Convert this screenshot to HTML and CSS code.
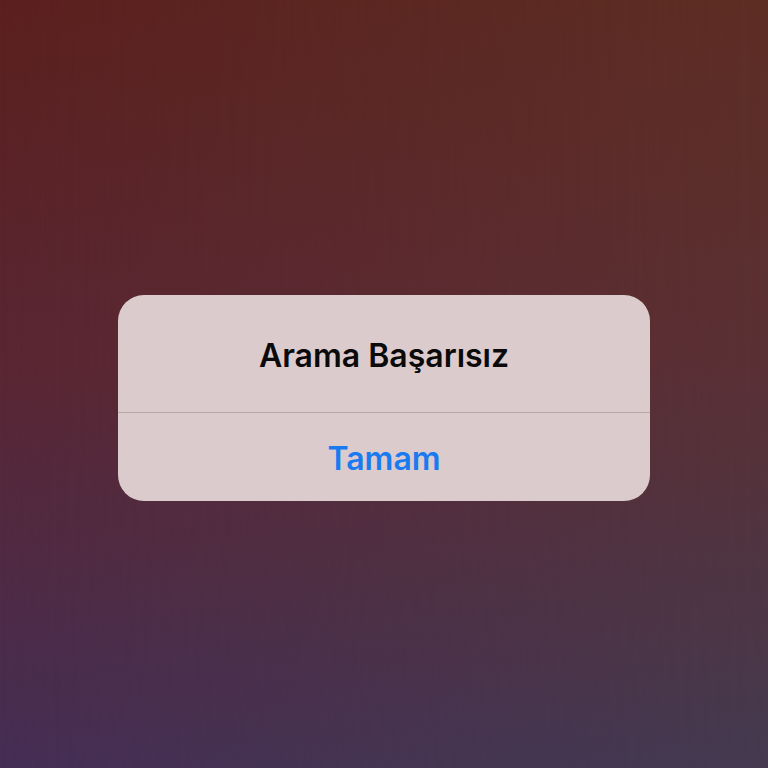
FILE: index.html
```html
<!DOCTYPE html>
<html lang="tr">
<head>
<meta charset="utf-8">
<link rel="stylesheet" href="styles.css">
</head>
<body>
<div class="screen">
  <div class="alert">
    <div class="alert-title">Arama Başarısız</div>
    <div class="alert-action">Tamam</div>
  </div>
</div>
</body>
</html>
```
FILE: styles.css
```css
html, body {
  margin: 0;
  padding: 0;
  width: 768px;
  height: 768px;
  overflow: hidden;
}
body {
  background: linear-gradient(to bottom, #5b201e 0%, #5a2633 47%, #452e55 100%);
  font-family: Inter, "Noto Sans", sans-serif;
}
.screen {
  position: relative;
  width: 768px;
  height: 768px;
  display: flex;
  align-items: center;
  justify-content: center;
}
.screen::before {
  content: "";
  position: absolute;
  inset: 0;
  background: linear-gradient(to bottom, #5d2e24 0%, #5a3034 47%, #443a50 100%);
  -webkit-mask-image: linear-gradient(to right, transparent, black);
  mask-image: linear-gradient(to right, transparent, black);
}
.alert {
  position: relative;
  width: 532px;
  margin-top: 28px;
  background: #dccbcd;
  border-radius: 26px;
  display: flex;
  flex-direction: column;
}
.alert-title {
  height: 118px;
  padding-top: 3px;
  display: flex;
  align-items: center;
  justify-content: center;
  font-size: 32px;
  font-weight: 600;
  color: #0a0a0a;
  border-bottom: 1px solid #b9a8ab;
  box-sizing: border-box;
}
.alert-action {
  height: 88px;
  padding-top: 3px;
  box-sizing: border-box;
  display: flex;
  align-items: center;
  justify-content: center;
  font-size: 32px;
  font-weight: 600;
  color: #1a7bf0;
}
```
